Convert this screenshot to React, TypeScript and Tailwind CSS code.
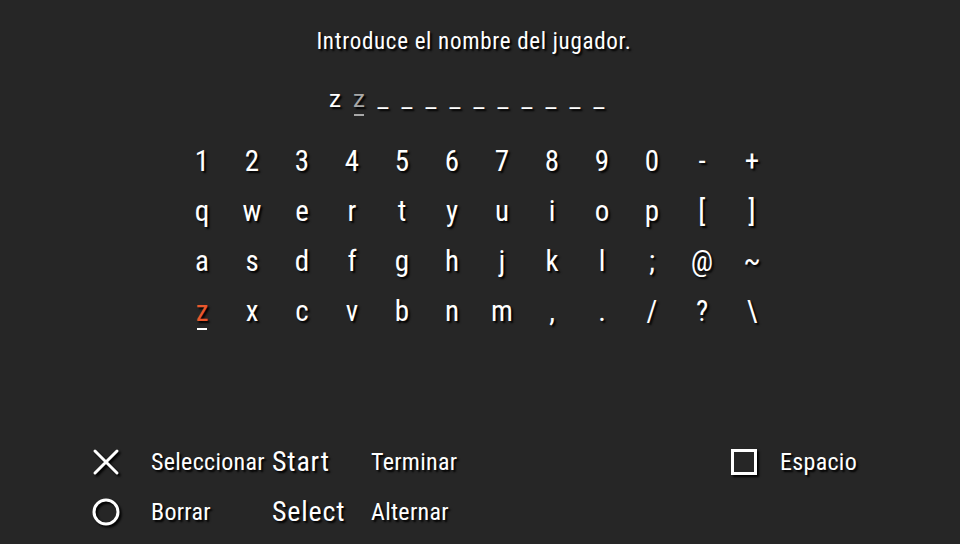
import React from 'react';

const rows = [
  ['1', '2', '3', '4', '5', '6', '7', '8', '9', '0', '-', '+'],
  ['q', 'w', 'e', 'r', 't', 'y', 'u', 'i', 'o', 'p', '[', ']'],
  ['a', 's', 'd', 'f', 'g', 'h', 'j', 'k', 'l', ';', '@', '~'],
  ['z', 'x', 'c', 'v', 'b', 'n', 'm', ',', '.', '/', '?', '\\'],
];

const shadow = '[text-shadow:2px_2px_2px_#000]';

const App: React.FC = () => {
  const slots = Array.from({ length: 10 });

  return (
    <div
      className={`w-[960px] h-[544px] bg-[#262626] text-white flex flex-col overflow-hidden [font-stretch:75%] ${shadow}`}
      style={{ fontFamily: 'Roboto, "Liberation Sans", sans-serif' }}
    >
      {/* Prompt */}
      <div className="h-[84px] pt-[26px] flex justify-center">
        <span className="text-[23px] leading-[32px] tracking-[0.7px] mr-[12px]">
          Introduce el nombre del jugador.
        </span>
      </div>

      {/* Name entry */}
      <div className="h-[36px] flex ml-[323px] text-[24px] leading-[30px] [font-stretch:100%]">
        <span className="w-[24px] text-center">z</span>
        <span className="w-[24px] text-center text-[#a8a8a8] relative">
          z
          <span className="absolute left-[7px] right-[7px] bottom-[4px] h-[2px] bg-[#a8a8a8]" />
        </span>
        {slots.map((_, i) => (
          <span key={i} className="w-[24px] text-center">_</span>
        ))}
      </div>

      {/* Keyboard */}
      <div className="mt-[17px] ml-[177px] grid grid-cols-[repeat(12,50px)] grid-rows-[repeat(4,50px)] text-[29px]">
        {rows.flat().map((k, i) => (
          <div key={i} className="flex items-center justify-center relative">
            {i === 36 ? (
              <span className="text-[#e8572c] relative">
                z
                <span className="absolute left-[1px] right-[1px] bottom-[4px] h-[2px] bg-white" />
              </span>
            ) : (
              <span>{k}</span>
            )}
          </div>
        ))}
      </div>

      {/* Button hints */}
      <div className="mt-auto mb-[7px] ml-[92px] mr-[103px] flex justify-between">
        <div className="grid grid-cols-[59px_121px_99px_auto] grid-rows-[50px_50px] items-center text-[24px] tracking-[0.3px]">
          <svg width="28" height="28" viewBox="0 0 28 28" className="[filter:drop-shadow(2px_2px_1px_#000)]">
            <path d="M3 3 L25 25 M25 3 L3 25" stroke="white" strokeWidth="3" strokeLinecap="round" />
          </svg>
          <span>Seleccionar</span>
          <span className="text-[28px] tracking-[0.8px]">Start</span>
          <span>Terminar</span>
          <svg width="28" height="28" viewBox="0 0 28 28" className="[filter:drop-shadow(2px_2px_1px_#000)]">
            <circle cx="14" cy="14" r="12" fill="none" stroke="white" strokeWidth="3" />
          </svg>
          <span>Borrar</span>
          <span className="text-[28px] tracking-[0.8px]">Select</span>
          <span>Alternar</span>
        </div>
        <div className="h-[50px] flex items-center gap-[23px] text-[24px] tracking-[0.3px]">
          <span className="w-[26px] h-[26px] border-[3px] border-white shadow-[2px_2px_2px_#000]" />
          <span>Espacio</span>
        </div>
      </div>
    </div>
  );
};

export default App;
